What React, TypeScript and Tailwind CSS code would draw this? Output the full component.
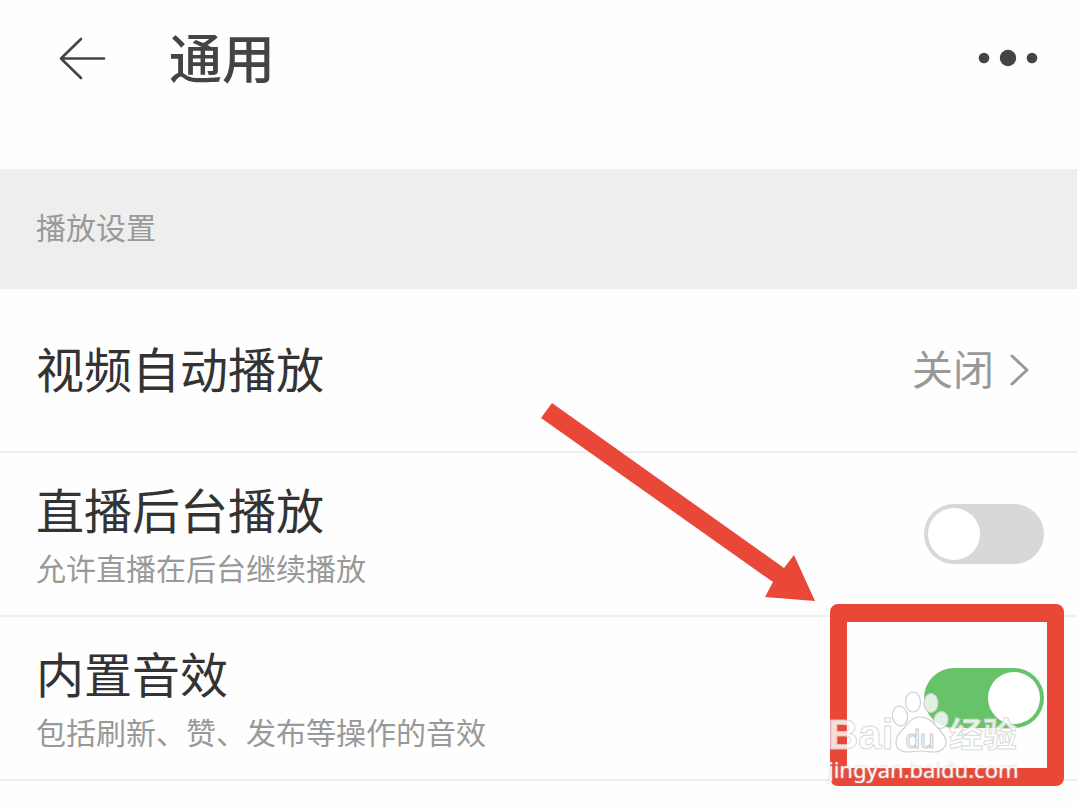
import React, { useState } from "react";

type SwitchRowProps = {
  id: string;
  title: string;
  detail: string;
  initial: boolean;
  children?: React.ReactNode;
};

function SwitchRow({ id, title, detail, initial, children }: SwitchRowProps) {
  const [on, setOn] = useState(initial);
  return (
    <li className="relative flex min-h-[164px] items-center justify-between border-b-2 border-[#efefef] pl-9 pr-[33px]">
      <label htmlFor={id} className="flex flex-col pb-1.5">
        <span className="text-5xl leading-[72px] text-[#333333]">{title}</span>
        <span className="text-3xl leading-[46px] text-[#999999]">{detail}</span>
      </label>
      <input
        id={id}
        type="checkbox"
        role="switch"
        checked={on}
        onChange={(event) => setOn(event.target.checked)}
        className="h-[60px] w-[120px] shrink-0 cursor-pointer appearance-none rounded-full bg-[#d8d8d8] p-1 before:block before:size-[52px] before:rounded-full before:bg-white before:content-[''] checked:bg-[#67c36a] checked:before:ml-[60px]"
      />
      {children}
    </li>
  );
}

function Arrow() {
  return (
    <svg
      aria-hidden="true"
      viewBox="0 0 274 198"
      className="pointer-events-none absolute -top-[214px] right-[262px] w-[274px]"
    >
      <path d="M11 0 243 165 253 152 274 198 224 194 232 179 0 15Z" fill="#e94738" />
    </svg>
  );
}

function Watermark() {
  return (
    <div className="pointer-events-none absolute right-[56px] top-[74px] flex w-[193px] flex-col font-['Liberation_Sans','Noto_Sans_CJK_SC',sans-serif] text-white/80">
      <div className="flex h-[62px] items-end">
        <span className="w-[63px] text-[42px] font-bold leading-[36px] [-webkit-text-stroke:1px_#d0d0d0cc]">
          Bai
        </span>
        <span className="relative block h-[62px] w-[58px]">
          <svg
            aria-hidden="true"
            viewBox="0 0 58 62"
            className="absolute inset-0"
            fill="#ffffffcc"
            stroke="#d0d0d0"
            strokeWidth="1.2"
          >
            <ellipse cx="9" cy="25" rx="7.5" ry="10" transform="rotate(-10 9 25)" />
            <ellipse cx="22" cy="11" rx="7.5" ry="10" />
            <ellipse cx="40" cy="12" rx="7" ry="9.5" />
            <ellipse cx="50" cy="29" rx="7" ry="8.5" transform="rotate(10 50 29)" />
            <path d="M29 26C22 26 18 30 15 35C12 39 5 43 5 51C5 58 10 61 16 61C21 61 25 60 30 60C35 60 38 61 43 61C50 61 55 57 55 51C55 44 48 39 45 35C41 30 37 26 29 26Z" />
          </svg>
          <span className="absolute inset-x-0 top-[36px] text-center text-[26px] leading-[24px] [-webkit-text-stroke:1px_#c8c8c8]">
            du
          </span>
        </span>
        <span className="whitespace-nowrap text-[34px] font-bold leading-[36px] [-webkit-text-stroke:1px_#d0d0d0cc]">
          经验
        </span>
      </div>
      <span className="mt-1 whitespace-nowrap font-['Noto_Sans',sans-serif] text-[22px] leading-[24px] text-white/90 [text-shadow:0_0_2px_#bbbbbb]">
        jingyan.baidu.com
      </span>
    </div>
  );
}

export default function App() {
  return (
    <main className="min-h-screen overflow-hidden bg-[#fefefe] font-['Noto_Sans_CJK_SC',sans-serif]">
      <header className="flex items-center pb-[53px] pl-14 pr-9 text-[#444444]">
        <button type="button" aria-label="返回" className="flex size-[52px] items-center">
          <svg
            viewBox="0 0 52 52"
            className="size-[52px]"
            fill="none"
            stroke="currentColor"
            strokeWidth="2.6"
            strokeLinecap="round"
            strokeLinejoin="round"
          >
            <path d="M25 7 5 26.500 25 46M5 26.500H48" />
          </svg>
        </button>
        <h1 className="ml-[61px] pb-1 text-[53px] font-medium leading-[112px]">通用</h1>
        <button type="button" aria-label="更多" className="ml-auto">
          <svg viewBox="0 0 64 20" className="h-5 w-16" fill="currentColor">
            <circle cx="7" cy="10" r="5.3" />
            <circle cx="31" cy="10" r="8.200" />
            <circle cx="55" cy="10" r="5.3" />
          </svg>
        </button>
      </header>

      <section>
        <h2 className="bg-[#eeeeee] pb-1.5 pl-9 text-3xl leading-[114px] text-[#999999]">
          播放设置
        </h2>
        <ul>
          <li className="border-b-2 border-[#efefef]">
            <button
              type="button"
              className="flex min-h-[162px] w-full items-center justify-between pl-9 pr-[47px] text-left"
            >
              <span className="pb-1.5 text-5xl leading-[72px] text-[#333333]">视频自动播放</span>
              <span className="flex items-center gap-4 text-[#999999]">
                <span className="pb-1.5 text-[41px] leading-[72px]">关闭</span>
                <svg
                  aria-hidden="true"
                  viewBox="0 0 20 32"
                  className="h-8 w-5"
                  fill="none"
                  stroke="currentColor"
                  strokeWidth="3"
                  strokeLinecap="round"
                  strokeLinejoin="round"
                >
                  <path d="M2 2 17 16 2 30" />
                </svg>
              </span>
            </button>
          </li>
          <SwitchRow
            id="background-play"
            title="直播后台播放"
            detail="允许直播在后台继续播放"
            initial={false}
          />
          <SwitchRow
            id="sound-effects"
            title="内置音效"
            detail="包括刷新、赞、发布等操作的音效"
            initial={true}
          >
            <Arrow />
            <div className="pointer-events-none absolute -top-[13px] right-[13px] h-[182px] w-[234px] rounded-lg border-x-[17px] border-y-[18px] border-[#e94738]" />
            <Watermark />
          </SwitchRow>
        </ul>
      </section>
    </main>
  );
}
